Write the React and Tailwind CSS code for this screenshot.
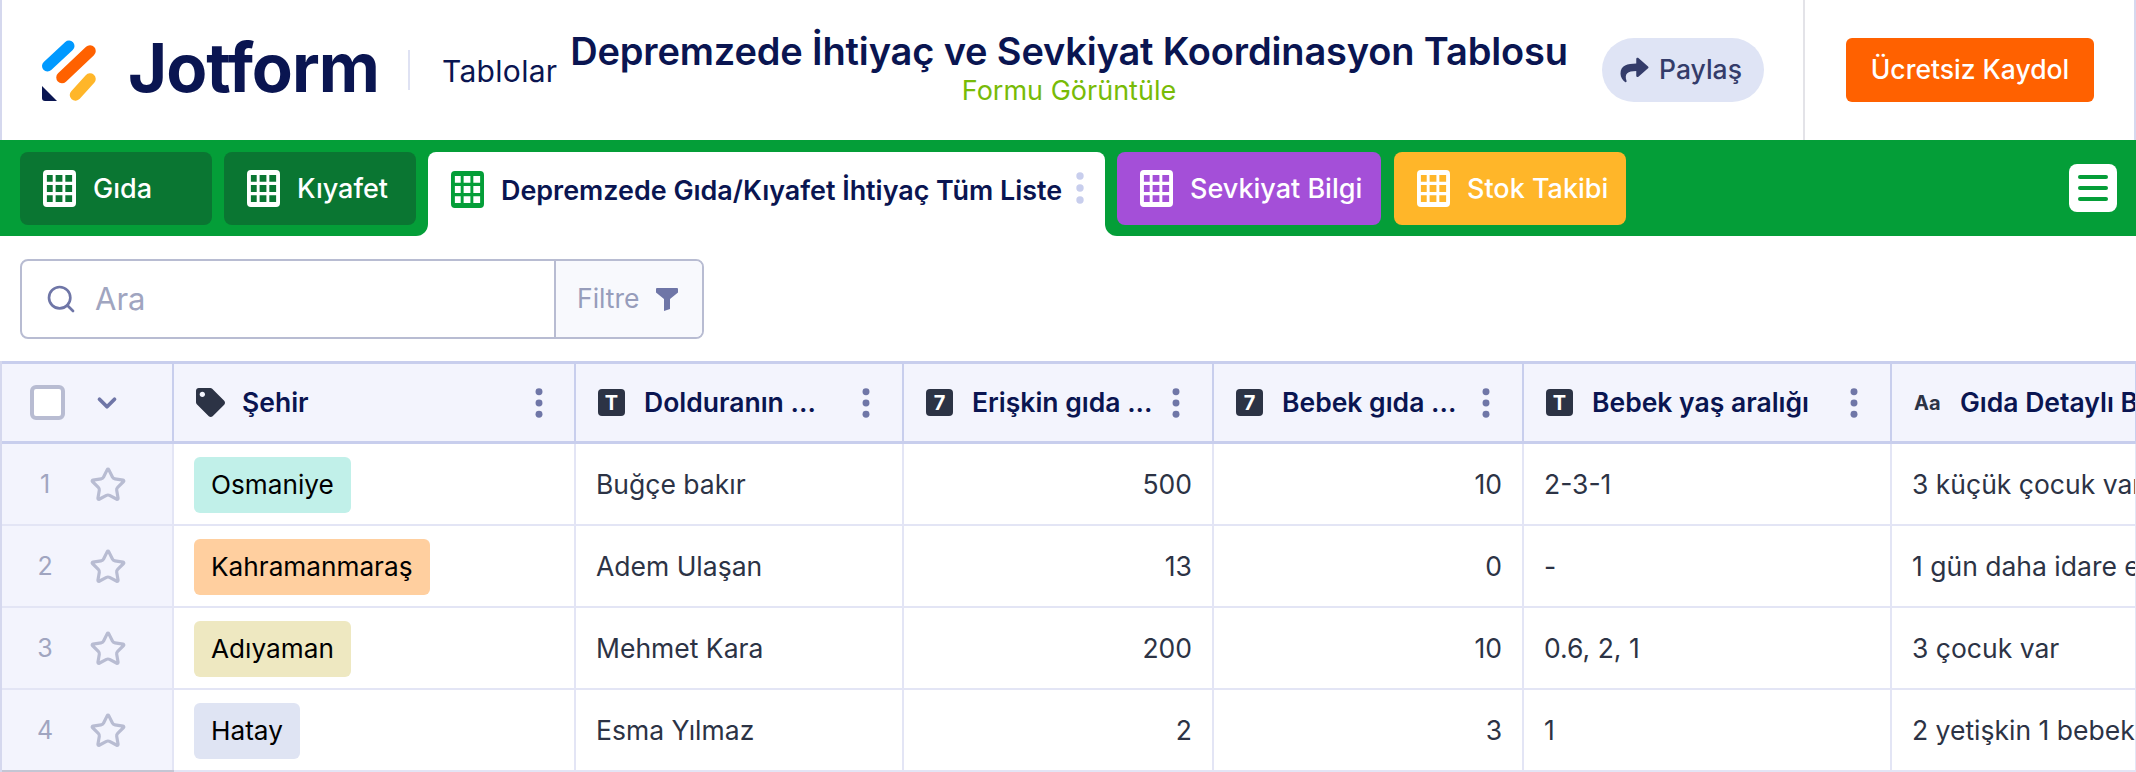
import React from "react";
import { FaShare, FaTag } from "react-icons/fa";
import { Search, ChevronDown, Star } from "lucide-react";

function GridIcon({ className }) {
  return (
    <svg viewBox="0 0 34 38" className={className} fill="currentColor" fillRule="evenodd">
      <path d="M4 0h26a4 4 0 0 1 4 4v30a4 4 0 0 1-4 4H4a4 4 0 0 1-4-4V4a4 4 0 0 1 4-4ZM4 5v7h6V5ZM13 5v7h7V5ZM23 5v7h7V5ZM4 15.500v7h6v-7ZM13 15.500v7h7v-7ZM23 15.500v7h7v-7ZM4 26v7h6v-7ZM13 26v7h7v-7ZM23 26v7h7v-7Z" />
    </svg>
  );
}

function Dots({ className }) {
  return (
    <svg viewBox="0 0 8 32" className={className} fill="currentColor">
      <circle cx="4" cy="4" r="3.700" />
      <circle cx="4" cy="16" r="3.700" />
      <circle cx="4" cy="28" r="3.700" />
    </svg>
  );
}

function Logo() {
  return (
    <svg viewBox="0 0 54 61" className="w-[54px] h-[61px] shrink-0">
      <path d="M5.500 26 L27 6" stroke="#0099ff" strokeWidth="11" strokeLinecap="round" />
      <path d="M20 37.500 L48 11" stroke="#ff6100" strokeWidth="11.500" strokeLinecap="round" />
      <path d="M33.500 55 L48 39" stroke="#ffb629" strokeWidth="11.500" strokeLinecap="round" />
      <path d="M0 46 L15 61 H3 a3 3 0 0 1 -3 -3 Z" fill="#0a1551" />
    </svg>
  );
}

function Tab({ label, bg }) {
  return (
    <div className={`h-[73px] rounded-lg flex items-center pl-[23px] text-white text-[27px] font-medium whitespace-nowrap ${bg}`}>
      <GridIcon className="w-[33px] h-[37px] mr-[17px]" />
      <span className="mt-[2px]">{label}</span>
    </div>
  );
}

const columns = [
  { w: "w-[402px]", icon: "tag", label: "Şehir", dots: "pr-[31px]" },
  { w: "w-[328px]", icon: "T", label: "Dolduranın ...", dots: "pr-[32px]" },
  { w: "w-[310px]", icon: "7", label: "Erişkin gıda ...", dots: "pr-[32px]" },
  { w: "w-[310px]", icon: "7", label: "Bebek gıda ...", dots: "pr-[32px]" },
  { w: "w-[368px]", icon: "T", label: "Bebek yaş aralığı", dots: "pr-[32px]" },
  { w: "w-[245px]", icon: "Aa", label: "Gıda Detaylı Bilgi", dots: "" },
];

const rows = [
  { city: "Osmaniye", tag: "bg-[#c1f0e9]", name: "Buğçe bakır", a: "500", b: "10", age: "2-3-1", detail: "3 küçük çocuk var" },
  { city: "Kahramanmaraş", tag: "bg-[#ffcf9f]", name: "Adem Ulaşan", a: "13", b: "0", age: "-", detail: "1 gün daha idare edecek" },
  { city: "Adıyaman", tag: "bg-[#eee8c1]", name: "Mehmet Kara", a: "200", b: "10", age: "0.6, 2, 1", detail: "3 çocuk var" },
  { city: "Hatay", tag: "bg-[#dfe4f3]", name: "Esma Yılmaz", a: "2", b: "3", age: "1", detail: "2 yetişkin 1 bebek" },
];

function HeaderIcon({ icon }) {
  if (icon === "tag") return <FaTag className="w-[29px] h-[29px] text-[#2c3345] mr-[17px]" />;
  if (icon === "Aa")
    return <span className="w-[26px] mr-[20px] text-[20px] font-bold text-[#2c3345] text-center">Aa</span>;
  return (
    <span className="w-[27px] h-[27px] mr-[19px] rounded-[4px] bg-[#2c3345] text-white text-[20px] font-bold flex items-center justify-center">
      {icon}
    </span>
  );
}

function Cell({ w, className = "", children }) {
  return (
    <div className={`${w} shrink-0 h-full flex items-center border-r-2 border-[#e3e5f5] px-[20px] pt-[2px] text-[26.500px] text-[#2c3345] whitespace-nowrap overflow-hidden ${className}`}>
      {children}
    </div>
  );
}

export default function App() {
  return (
    <div className="w-[2136px] h-[772px] overflow-hidden bg-white font-['Inter','Liberation_Sans',sans-serif] text-[#0a1551]">
      <header className="h-[140px] flex items-center border-l-2 border-r-2 border-[#d5d8ee]">
        <div className="ml-[40px] w-[528px] flex items-center">
          <Logo />
          <span className="ml-[32px] w-[250px] text-[67px] leading-none font-bold tracking-[-1px] mt-[-5px] whitespace-nowrap">Jotform</span>
          <span className="ml-[30px] w-[2px] h-[40px] bg-[#dfe2f3]" />
          <span className="ml-[32px] text-[30px] tracking-[0.300px] mt-[2px]">Tablolar</span>
        </div>
        <div className="w-[998px] flex flex-col items-center mt-[-1px]">
          <h1 className="text-[38px] leading-[42px] font-semibold tracking-[-0.150px] whitespace-nowrap">Depremzede İhtiyaç ve Sevkiyat Koordinasyon Tablosu</h1>
          <a className="text-[27px] leading-[38px] text-[#78bb07]">Formu Görüntüle</a>
        </div>
        <button className="ml-[34px] w-[162px] h-[64px] rounded-full bg-[#dfe4f5] text-[#343c6a] text-[26.500px] font-medium flex items-center justify-center gap-[9px]">
          <FaShare className="w-[31px] h-[28px] ml-[-5px]" />
          Paylaş
        </button>
        <div className="ml-[39px] w-[2px] h-full bg-[#e3e3e8]" />
        <button className="ml-[41px] w-[248px] h-[64px] rounded-md bg-[#ff6100] text-white text-[26.500px] font-medium whitespace-nowrap">
          Ücretsiz Kaydol
        </button>
      </header>

      <nav className="h-[96px] flex">
        <div className="bg-[#049e38] rounded-br-xl pl-[20px] pr-[12px] pt-[12px] flex gap-[12px]">
          <div className="w-[192px]"><Tab label="Gıda" bg="bg-[#0a7632]" /></div>
          <div className="w-[192px]"><Tab label="Kıyafet" bg="bg-[#0a7632]" /></div>
        </div>
        <div className="bg-[#049e38] pt-[12px]">
          <div className="relative w-[677px] h-[84px] bg-white rounded-t-lg flex pl-[23px] pt-[19px] text-[26.900px] font-semibold">
            <GridIcon className="w-[33px] h-[37px] mr-[17px] text-[#049e38]" />
            <span className="leading-[36px] mt-[1px] whitespace-nowrap">Depremzede Gıda/Kıyafet İhtiyaç Tüm Liste</span>
            <Dots className="absolute left-[648px] top-[20px] w-[8px] h-[32px] text-[#c8ceed]" />
          </div>
        </div>
        <div className="flex-1 bg-[#049e38] rounded-bl-xl pl-[12px] pr-[19px] pt-[12px] flex gap-[13px]">
          <div className="w-[264px]"><Tab label="Sevkiyat Bilgi" bg="bg-[#a44fd8]" /></div>
          <div className="w-[232px]"><Tab label="Stok Takibi" bg="bg-[#ffb629]" /></div>
          <button className="ml-auto mt-[12px] w-[48px] h-[48px] rounded-lg bg-white flex flex-col items-center justify-center gap-[7px]">
            <span className="w-[30px] h-[4px] rounded-full bg-[#049e38]" />
            <span className="w-[30px] h-[4px] rounded-full bg-[#049e38]" />
            <span className="w-[30px] h-[4px] rounded-full bg-[#049e38]" />
          </button>
        </div>
      </nav>

      <div className="h-[125px] pl-[20px] pt-[23px]">
        <div className="w-[684px] h-[80px] rounded-lg border-2 border-[#b8bcd2] flex overflow-hidden">
          <div className="w-[534px] flex items-center border-r-2 border-[#b8bcd2] pl-[23px] gap-[18px]">
            <Search className="w-[32px] h-[32px] text-[#6f76a7]" strokeWidth={2} />
            <span className="text-[31px] text-[#a0a5c0]">Ara</span>
          </div>
          <div className="flex-1 bg-[#f8f9fd] flex items-center pl-[21px] gap-[16px]">
            <span className="text-[26.500px] text-[#979dbb]">Filtre</span>
            <svg viewBox="0 0 22 23" className="w-[22px] h-[23px] text-[#6f76a7]" fill="currentColor">
              <path d="M1 0h20a1 1 0 0 1 1 1v3.500L14 11v10l-6 2V11L0 4.500V1a1 1 0 0 1 1-1Z" />
            </svg>
          </div>
        </div>
      </div>

      <div className="border-l-2 border-[#d5d8ee]">
        <div className="h-[83px] flex bg-[#f3f4fd] border-y-[3px] border-[#c8ceed]">
          <div className="w-[172px] shrink-0 border-r-2 border-[#c8ceed] flex items-center pl-[28px]">
            <span className="w-[35px] h-[35px] rounded-md bg-white border-4 border-[#b8bcd2]" />
            <ChevronDown className="ml-[27px] w-[30px] h-[30px] text-[#6f76a7]" strokeWidth={3} />
          </div>
          {columns.map((c) => (
            <div key={c.label} className={`${c.w} shrink-0 border-r-2 border-[#c8ceed] flex items-center pl-[22px] ${c.dots} text-[26.500px] font-semibold whitespace-nowrap overflow-hidden`}>
              <HeaderIcon icon={c.icon} />
              <span>{c.label}</span>
              {c.dots && <Dots className="ml-auto w-[8px] h-[30px] text-[#6f76a7]" />}
            </div>
          ))}
        </div>
        {rows.map((r, i) => (
          <div key={r.city} className="h-[82px] flex border-b-2 border-[#e3e5f5]">
            <div className={`w-[172px] shrink-0 bg-[#f3f4fd] border-r-2 border-[#e3e5f5] flex items-center pl-[35px] pt-[2px] ${i === 3 ? "shadow-[0_2px_0_#c4c6d4]" : ""}`}>
              <span className="w-[16px] text-center text-[25px] text-[#a0a5c0]">{i + 1}</span>
              <Star className="ml-[36px] w-[38px] h-[38px] text-[#b8bcd2]" strokeWidth={2} />
            </div>
            <Cell w="w-[402px]">
              <span className={`h-[56px] rounded-md px-[17px] flex items-center text-black text-[26.200px] ${r.tag}`}>{r.city}</span>
            </Cell>
            <Cell w="w-[328px]">{r.name}</Cell>
            <Cell w="w-[310px]" className="justify-end">{r.a}</Cell>
            <Cell w="w-[310px]" className="justify-end">{r.b}</Cell>
            <Cell w="w-[368px]">{r.age}</Cell>
            <Cell w="w-[245px]" className="border-r-0">{r.detail}</Cell>
          </div>
        ))}
      </div>
    </div>
  );
}
